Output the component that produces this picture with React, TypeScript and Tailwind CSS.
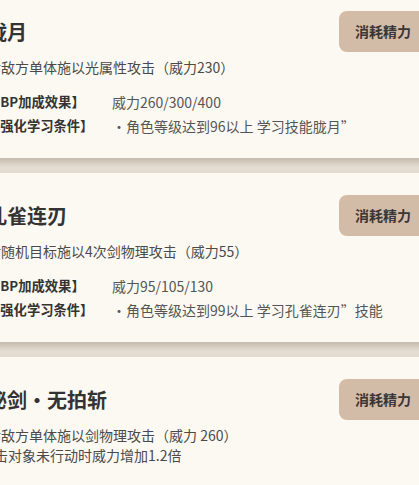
import React from 'react';

interface Skill {
  name: string;
  desc: string[];
  bp?: string;
  condition?: string;
}

const skills: Skill[] = [
  {
    name: '胧月',
    desc: ['对敌方单体施以光属性攻击（威力230）'],
    bp: '威力260/300/400',
    condition: '・角色等级达到96以上 学习技能胧月”'
  },
  {
    name: '孔雀连刃',
    desc: ['对随机目标施以4次剑物理攻击（威力55）'],
    bp: '威力95/105/130',
    condition: '・角色等级达到99以上 学习孔雀连刃”技能'
  },
  {
    name: '秘剑・无拍斩',
    desc: ['对敌方单体施以剑物理攻击（威力 260）', '攻击对象未行动时威力增加1.2倍']
  }
];

const font = { fontFamily: '"Noto Sans CJK SC", "Liberation Sans", sans-serif' };

const SkillCard = ({ skill }: { skill: Skill }) => (
  <div className="w-[480px] bg-[#fcf9f3] px-[20px] pt-[22px] pb-[20px] shadow-[0_4px_9px_rgba(80,60,40,0.3)]">
    <div className="flex items-center justify-between h-[41px]">
      <h3 className="text-[20px] font-bold leading-none text-[#333333]">{skill.name}</h3>
      <button className="h-[41px] px-4 rounded-lg bg-[#d3bca7] text-[14px] font-semibold text-[#3b3633]">
        消耗精力
      </button>
    </div>

    <div className="mt-[5px] text-[14px] leading-[20px] text-[#4a4a4a]">
      {skill.desc.map((line, i) => (
        <p key={i} className={i > 0 ? '-ml-[7px]' : ''}>
          {line}
        </p>
      ))}
    </div>

    {skill.bp && (
      <div className="mt-[13px] grid grid-cols-[125px_1fr] leading-[24px]">
        <span className="text-[13.3px] font-bold text-[#333333]">【BP加成效果】</span>
        <span className="text-[14px] text-[#555555]">{skill.bp}</span>
        <span className="text-[13.3px] font-bold text-[#333333]">【强化学习条件】</span>
        <span className="text-[14px] text-[#555555]">{skill.condition}</span>
      </div>
    )}
  </div>
);

export default function App() {
  return (
    <div className="h-[485px] overflow-hidden bg-[#ebe4d9]" style={font}>
      <div className="-mt-[11px] -ml-[33px] flex flex-col gap-[15px]">
        {skills.map(skill => (
          <SkillCard key={skill.name} skill={skill} />
        ))}
      </div>
    </div>
  );
}
